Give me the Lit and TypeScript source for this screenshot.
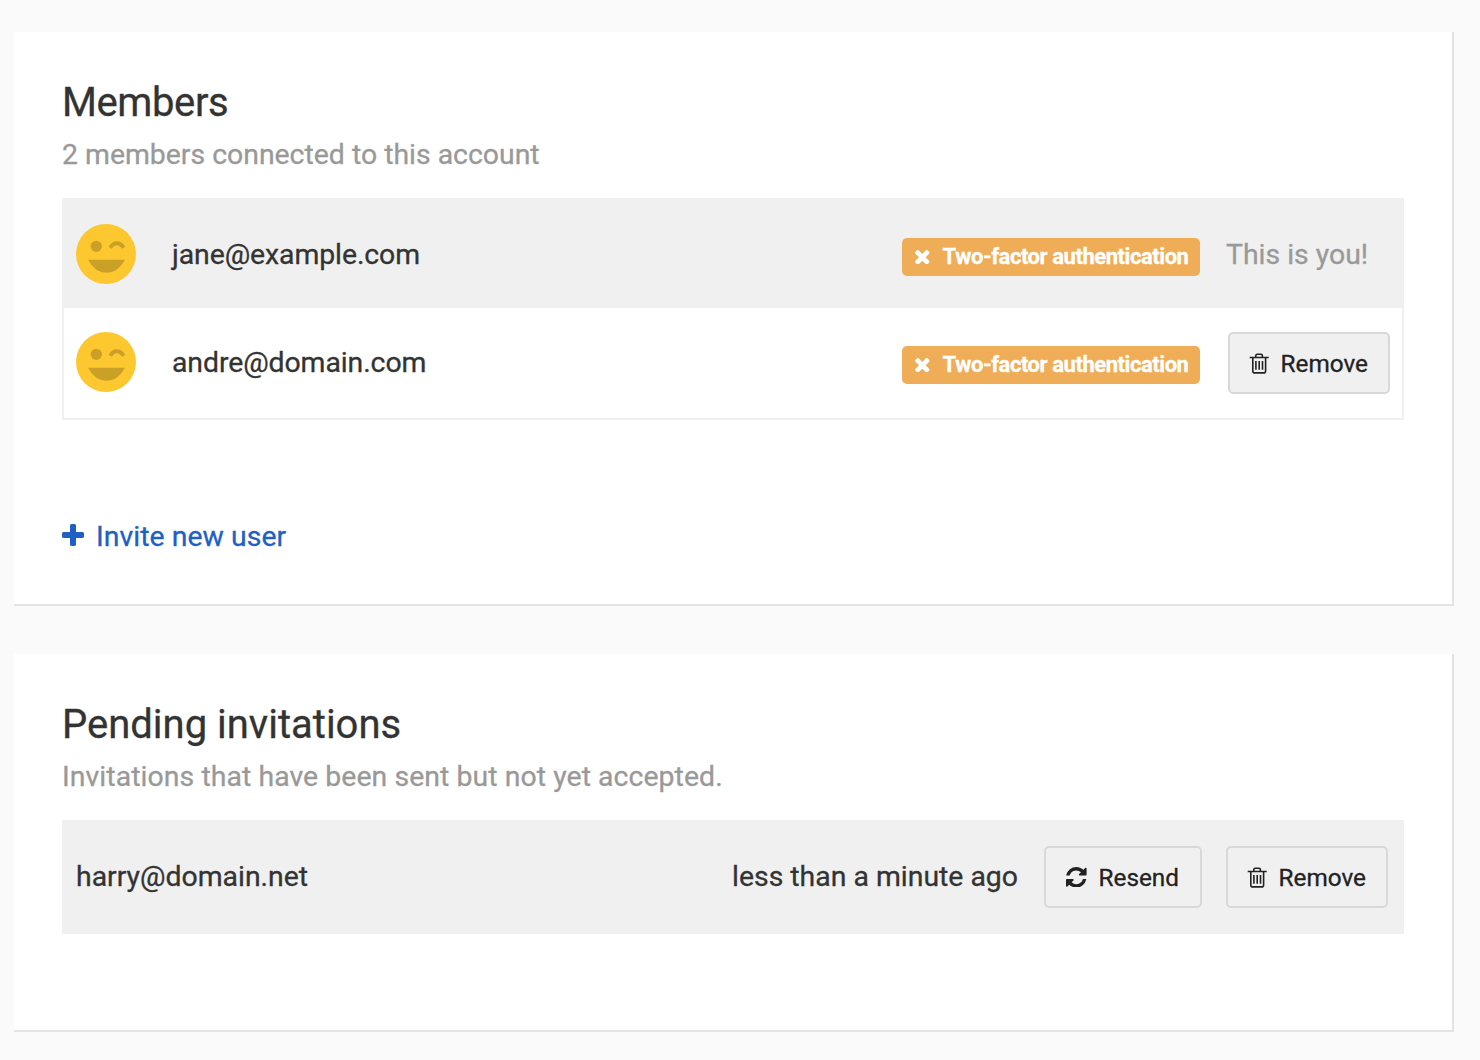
import { LitElement, html, css, svg } from "lit";
import { customElement, property } from "lit/decorators.js";

type IconName = "plus" | "times" | "refresh" | "trash";

const glyphs = {
  plus: {
    box: "192 128 1408 1408",
    body: svg`<path d="M1600 736v192q0 40-28 68t-68 28h-416v416q0 40-28 68t-68 28h-192q-40 0-68-28t-28-68v-416h-416q-40 0-68-28t-28-68v-192q0-40 28-68t68-28h416v-416q0-40 28-68t68-28h192q40 0 68 28t28 68v416h416q40 0 68 28t28 68z" fill="currentColor"/>`,
  },
  times: {
    box: "302 366 1188 1188",
    body: svg`<path d="M1490 1322q0 40-28 68l-136 136q-28 28-68 28t-68-28l-294-294-294 294q-28 28-68 28t-68-28l-136-136q-28-28-28-68t28-68l294-294-294-294q-28-28-28-68t28-68l136-136q28-28 68-28t68 28l294 294 294-294q28-28 68-28t68 28l136 136q28 28 28 68t-28 68l-294 294 294 294q28 28 28 68z" fill="currentColor"/>`,
  },
  refresh: {
    box: "128 128 1536 1536",
    body: svg`<path d="M1639 1056q0 5-1 7-64 268-268 434.500t-478 166.500q-146 0-282.500-55t-243.500-157l-129 129q-19 19-45 19t-45-19-19-45v-448q0-26 19-45t45-19h448q26 0 45 19t19 45-19 45l-137 137q71 66 161 102t187 36q134 0 250-65t186-179q11-17 53-117 8-23 30-23h192q13 0 22.500 9.500t9.500 22.500zm25-800v448q0 26-19 45t-45 19h-448q-26 0-45-19t-19-45 19-45l138-138q-148-137-349-137-134 0-250 65t-186 179q-11 17-53 117-8 23-30 23h-199q-13 0-22.500-9.500t-9.500-22.500v-7q65-268 270-434.500t480-166.500q146 0 284 55.500t245 156.500l130-129q19-19 45-19t45 19 19 45z" fill="currentColor"/>`,
  },
  trash: {
    box: "0 0 20 21",
    body: svg`<g fill="none" stroke="currentColor" stroke-width="1.600"><path d="M.7 4.500h19M6.800 4.500V2.800q0-1.500 1.500-1.500h3.600q1.500 0 1.500 1.500v1.700M3.800 4.500v13.400q0 2 2 2h8.800q2 0 2-2V4.500"/><path d="M6.900 8v8.700M10.200 8v8.700M13.500 8v8.700"/></g>`,
  },
};

@customElement("ui-icon")
class UiIcon extends LitElement {
  static styles = css`
    :host {
      display: block;
      flex: none;
    }
    .glyph {
      display: block;
      width: 100%;
      height: 100%;
    }
  `;
  @property() name: IconName = "plus";
  render() {
    const g = glyphs[this.name];
    return html`<svg class="glyph" viewBox=${g.box} aria-hidden="true">${g.body}</svg>`;
  }
}

@customElement("wink-avatar")
class WinkAvatar extends LitElement {
  static styles = css`
    :host {
      display: block;
      flex: none;
      width: 60px;
      height: 60px;
    }
    .face {
      display: block;
    }
  `;
  render() {
    return html`<svg class="face" width="60" height="60" viewBox="0 0 60 60" aria-hidden="true">
      <circle cx="30" cy="30" r="30" fill="#fdc72f" />
      <circle cx="20.3" cy="22.3" r="5.6" fill="#caa126" />
      <path d="M34.300 23.900C37.500 17.700 44 17.700 47.600 23.800" fill="none" stroke="#caa126" stroke-width="3.800" />
      <path d="M12 35.700H49Q42 48.700 30.500 48.700T12 35.700Z" fill="#caa126" />
    </svg>`;
  }
}

@customElement("app-root")
class AppRoot extends LitElement {
  static styles = css`
    :host {
      display: block;
      box-sizing: border-box;
      height: 1060px;
      padding: 32px 26px 0 14px;
      background: #fafafa;
      color: #333;
      font: 400 28.400px/40px Roboto, "Liberation Sans", sans-serif;
      -webkit-text-stroke: 0.3px currentColor;
      overflow: hidden;
    }
    .card {
      box-sizing: border-box;
      background: #fff;
      border: solid #e4e4e4;
      border-width: 0 2px 2px 0;
      padding: 47px 48px 0;
    }
    .members {
      height: 574px;
      margin-bottom: 48px;
    }
    .pending {
      height: 378px;
    }
    .title {
      margin: 0;
      font-size: 40px;
      line-height: 48px;
      font-weight: 400;
    }
    .members .title {
      letter-spacing: -0.4px;
    }
    .sub {
      margin: 8px 0 23px;
      color: #999;
    }
    .pending .sub {
      letter-spacing: 0.07px;
    }
    .list {
      border: 2px solid #f0f0f0;
    }
    .row {
      display: flex;
      align-items: flex-start;
      box-sizing: border-box;
      padding: 24px 12px 0;
      height: 110px;
    }
    .row.shaded {
      background: #f0f0f0;
      height: 108px;
    }
    .list.invites .row {
      height: 110px;
      padding-right: 14px;
    }
    .mail {
      margin: 11px auto 0 36px;
      letter-spacing: -0.08px;
    }
    .invites .mail {
      margin-left: 0;
      letter-spacing: 0;
    }
    .badge {
      display: flex;
      align-items: center;
      box-sizing: border-box;
      width: 298px;
      height: 38px;
      margin-top: 14px;
      padding-left: 13px;
      border-radius: 5px;
      background: #efad57;
      color: #fff;
      font-size: 22px;
      white-space: nowrap;
    }
    .badge-label {
      font-weight: 700;
      letter-spacing: -0.450px;
    }
    .badge ui-icon {
      width: 14.600px;
      height: 14.600px;
      margin-right: 13px;
    }
    .you {
      width: 164px;
      margin: 11px 0 0 26px;
      box-sizing: border-box;
      color: #999;
    }
    .btn {
      display: flex;
      align-items: center;
      box-sizing: border-box;
      height: 62px;
      width: 162px;
      margin: 0 0 0 28px;
      padding: 0 0 0 19px;
      border: 2px solid #d8d8d8;
      border-radius: 5px;
      background: #f0f0f0;
      color: #222;
      font: inherit;
      font-size: 24.300px;
      -webkit-text-stroke: inherit;
      white-space: nowrap;
    }
    .btn span {
      padding-top: 1px;
    }
    .invites .btn {
      margin-left: 24px;
    }
    .invites .btn.resend {
      width: 158px;
      margin-left: 26px;
      padding-left: 20px;
    }
    .btn ui-icon {
      width: 20px;
      height: 21px;
      margin-right: 11.600px;
    }
    .btn.resend ui-icon {
      width: 20.600px;
      height: 20.600px;
      margin-right: 12px;
    }
    .ago {
      margin-top: 11px;
    }
    .invite {
      display: flex;
      align-items: center;
      margin-top: 96px;
      color: #205fc4;
      text-decoration: none;
    }
    .invite ui-icon {
      width: 22px;
      height: 22px;
      margin: 0 12px 3px 0;
    }
    .invite span {
      padding-top: 1px;
      letter-spacing: 0.050px;
    }
  `;

  private removeButton() {
    return html`<button class="btn" type="button"><ui-icon name="trash"></ui-icon><span>Remove</span></button>`;
  }

  private member(email: string, self: boolean) {
    return html`<div class="row ${self ? "shaded" : ""}">
      <wink-avatar></wink-avatar>
      <span class="mail">${email}</span>
      <span class="badge"><ui-icon name="times"></ui-icon><span class="badge-label">Two-factor authentication</span></span>
      ${self ? html`<span class="you">This is you!</span>` : this.removeButton()}
    </div>`;
  }

  render() {
    return html`
      <section class="card members">
        <h2 class="title">Members</h2>
        <p class="sub">2 members connected to this account</p>
        <div class="list">${this.member("jane@example.com", true)}${this.member("andre@domain.com", false)}</div>
        <a class="invite"><ui-icon name="plus"></ui-icon><span>Invite new user</span></a>
      </section>
      <section class="card pending">
        <h2 class="title">Pending invitations</h2>
        <p class="sub">Invitations that have been sent but not yet accepted.</p>
        <div class="list invites">
          <div class="row shaded">
            <span class="mail">harry@domain.net</span>
            <span class="ago">less than a minute ago</span>
            <button class="btn resend" type="button"><ui-icon name="refresh"></ui-icon><span>Resend</span></button>
            ${this.removeButton()}
          </div>
        </div>
      </section>
    `;
  }
}
